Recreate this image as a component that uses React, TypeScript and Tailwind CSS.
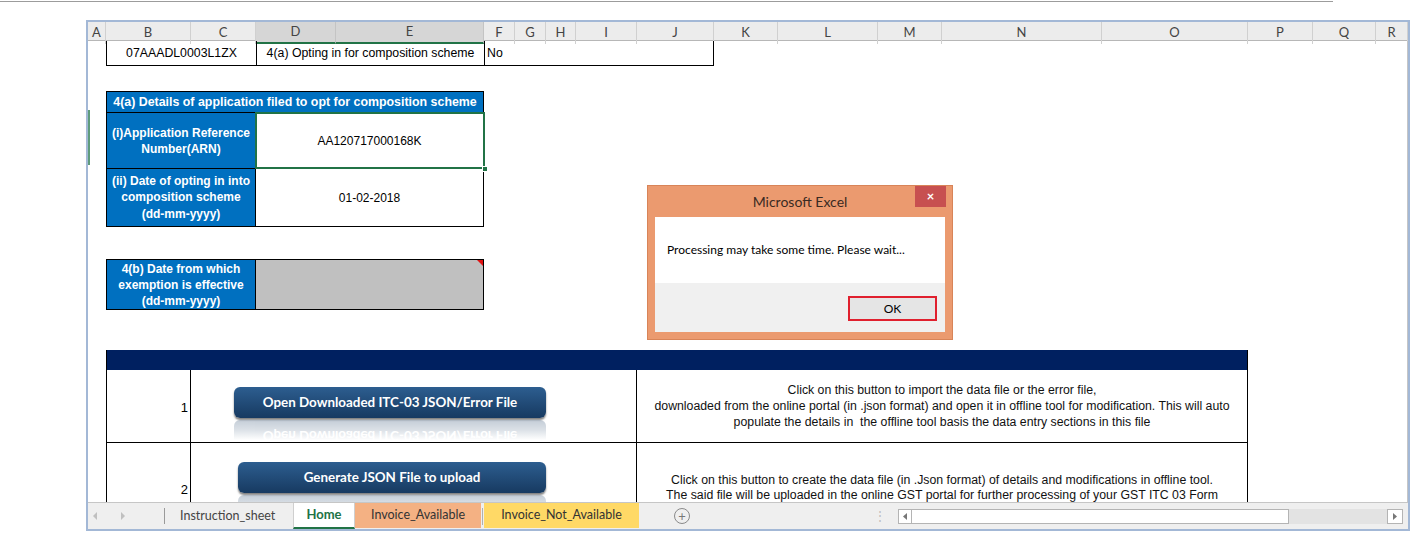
import React from 'react';

const gridCols =
  'grid grid-cols-[18px_85px_65px_80px_148px_31px_31px_30px_61px_77px_64px_100px_64px_160px_146px_65px_63px_32px]';

const columns = ['A', 'B', 'C', 'D', 'E', 'F', 'G', 'H', 'I', 'J', 'K', 'L', 'M', 'N', 'O', 'P', 'Q', 'R'];

const MacroButton = ({
  label,
  wrap,
  width,
  mirrorText = true,
}: {
  label: string;
  wrap: string;
  width: string;
  mirrorText?: boolean;
}) => {
  return (
    <div className={`${wrap} ${width}`}>
      <div className="h-[31px] rounded-[6px] bg-linear-to-b from-[#2d5e90] to-[#173a61] shadow-[0_2px_2px_rgba(0,0,0,0.5)] flex items-center justify-center text-white font-bold font-['Lato',sans-serif] text-[13.4px]">
        {label}
      </div>
      {/* glossy reflection under the shape */}
      <div className="relative h-[20px] overflow-hidden mt-[2px]">
        <div className="h-[31px] rounded-[6px] -scale-y-100 bg-[#6d849e] opacity-40 flex items-center justify-center text-white font-bold font-['Lato',sans-serif] text-[13.4px]">
          {mirrorText ? label : null}
        </div>
        <div className="absolute inset-0 bg-linear-to-b from-white/0 via-white/40 to-white" />
      </div>
    </div>
  );
};

const Dialog = () => {
  return (
    <div className="absolute left-[647px] top-[185px] w-[306px] h-[155px] bg-[#eb9a6f] border border-[#d88458] flex flex-col font-['Lato',sans-serif]">
      <div className="h-[31px] relative flex items-center justify-center text-[14px] text-[#3a2a22]">
        Microsoft Excel
        <div className="absolute top-0 right-[6px] w-[31px] h-[21px] bg-[#c75050] flex items-center justify-center text-white text-[13px] font-bold">
          ×
        </div>
      </div>
      <div className="mx-[7px] flex-1 flex flex-col">
        <div className="h-[66px] bg-white flex items-center pl-[12px] text-[12px] text-black">
          Processing may take some time. Please wait...
        </div>
        <div className="flex-1 bg-[#f0f0f0] flex justify-end pt-[13px] pr-[8px]">
          <div className="w-[89px] h-[25px] border-2 border-[#e0202e] bg-[#e5e5e5] flex items-center justify-center text-[12px] text-black">
            OK
          </div>
        </div>
      </div>
      <div className="h-[7px]" />
    </div>
  );
};

const TabBar = () => {
  return (
    <div className="h-[27px] bg-[#efefef] border-t border-[#c6c6c6] flex items-stretch font-['Lato',sans-serif] text-[12.5px] text-[#444]">
      <div className="w-[76px] shrink-0 flex items-center gap-[22px] pl-[4px]">
        <svg width="6" height="8" viewBox="0 0 6 8">
          <path d="M5 0 L1 4 L5 8 Z" fill="#c0c0c0" />
        </svg>
        <svg width="6" height="8" viewBox="0 0 6 8">
          <path d="M1 0 L5 4 L1 8 Z" fill="#c0c0c0" />
        </svg>
      </div>
      <div className="w-px h-[16px] shrink-0 bg-[#9a9a9a] self-center" />
      <div className="w-[128px] shrink-0 flex items-center pl-[15px] whitespace-nowrap">Instruction_sheet</div>
      <div className="w-[62px] shrink-0 bg-white border-x border-[#cfcfcf] border-b-2 border-b-[#217346] flex items-center justify-center font-bold text-[#217346] text-[13px]">
        Home
      </div>
      <div className="w-[126px] shrink-0 mb-[1px] bg-[#f4b183] flex items-center justify-center text-[#333] whitespace-nowrap">
        Invoice_Available
      </div>
      <div className="w-[3px] shrink-0 flex justify-center">
        <div className="w-px h-[17px] bg-[#b0b0b0] self-center" />
      </div>
      <div className="w-[155px] shrink-0 mb-[1px] bg-[#ffd966] flex items-center justify-center text-[#333] whitespace-nowrap">
        Invoice_Not_Available
      </div>
      <div className="ml-[35px] shrink-0 flex items-center">
        <div className="w-[16px] h-[16px] rounded-full border border-[#8a8a8a] flex items-center justify-center text-[#777] text-[13px] leading-none">
          +
        </div>
      </div>
      <div className="ml-[184px] shrink-0 flex items-center text-[#bdbdbd] text-[12px]">⋮</div>
      <div className="ml-[12px] shrink-0 flex items-center">
        <div className="w-[14px] h-[15px] border border-[#b4b4b4] bg-white flex items-center justify-center">
          <svg width="4" height="7" viewBox="0 0 4 7">
            <path d="M4 0 L0 3.5 L4 7 Z" fill="#777" />
          </svg>
        </div>
        <div className="w-[377px] h-[15px] border-y border-r border-[#b4b4b4] bg-white" />
        <div className="w-[98px] h-[15px] bg-[#e3e3e3]" />
        <div className="w-[16px] h-[15px] border border-[#b4b4b4] bg-white flex items-center justify-center">
          <svg width="4" height="7" viewBox="0 0 4 7">
            <path d="M0 0 L4 3.5 L0 7 Z" fill="#777" />
          </svg>
        </div>
      </div>
    </div>
  );
};

const App = () => {
  return (
    <div className="relative w-[1414px] h-[534px] bg-white overflow-hidden font-['Liberation_Sans',Arial,sans-serif] text-black">
      <div className="mt-px h-px w-[1333px] bg-[#9c9c9c]" />

      {/* Excel window */}
      <div className="mt-[18px] ml-[86px] w-[1324px] h-[511px] border-2 border-[#a3b8d6] flex flex-col">
        {/* column headers */}
        <div className={`${gridCols} h-[19px] bg-[#ececec] border-b border-[#b7b7b7] font-['Lato',sans-serif] text-[13px] text-[#444]`}>
          {columns.map((c) => (
            <div
              key={c}
              className={
                c === 'D' || c === 'E'
                  ? 'flex items-center justify-center bg-[#d6d6d6] border-r border-[#c4c4c4] border-b-2 border-b-[#217346]'
                  : 'flex items-center justify-center border-r border-[#d0d0d0]'
              }
            >
              {c}
            </div>
          ))}
        </div>

        {/* sheet */}
        <div className="h-[461px] overflow-hidden border-r border-[#c6c6c6] flex flex-col">
          <div className={`${gridCols} h-[25px] shrink-0 text-[12.3px]`}>
            <div />
            <div className="col-span-2 border-l border-b border-black flex items-center justify-center">07AAADL0003L1ZX</div>
            <div className="col-span-2 border-l border-b border-black flex items-center justify-center">
              4(a) Opting in for composition scheme
            </div>
            <div className="col-span-5 border-x border-b border-black flex items-center pl-[2px]">No</div>
          </div>

          <div className="h-[25px] shrink-0" />

          {/* 4(a) details */}
          <div className={`${gridCols} h-[136px] shrink-0`}>
            <div className="pt-[19px]">
              <div className="h-[55px] border-l-2 border-[#5f9c7d]" />
            </div>
            <div className="col-span-4 border border-black flex flex-col text-[12px]">
              <div className="h-[20px] bg-[#0070c0] text-white font-bold text-[12.4px] flex items-center justify-center whitespace-nowrap">
                4(a) Details of application filed to opt for composition scheme
              </div>
              <div className="h-[56px] border-t border-black flex">
                <div className="w-[149px] border-r border-black bg-[#0070c0] text-white font-bold text-center leading-[16px] flex items-center justify-center">
                  (i)Application Reference
                  <br />
                  Number(ARN)
                </div>
                <div className="flex-1 relative bg-white flex items-center justify-center">
                  AA120717000168K
                  <div className="absolute -top-px -left-px -right-[2px] -bottom-px border-2 border-[#217346]" />
                  <div className="absolute -bottom-[4px] -right-[5px] w-[6px] h-[6px] bg-[#217346] border border-white" />
                </div>
              </div>
              <div className="h-[58px] border-t border-black flex">
                <div className="w-[149px] border-r border-black bg-[#0070c0] text-white font-bold text-center leading-[16.5px] flex items-center justify-center">
                  (ii) Date of opting in into
                  <br />
                  composition scheme
                  <br />
                  (dd-mm-yyyy)
                </div>
                <div className="flex-1 bg-white flex items-center justify-center">01-02-2018</div>
              </div>
            </div>
          </div>

          <div className="h-[32px] shrink-0" />

          {/* 4(b) */}
          <div className={`${gridCols} h-[51px] shrink-0`}>
            <div />
            <div className="col-span-4 border border-black flex text-[12px]">
              <div className="w-[149px] border-r border-black bg-[#0070c0] text-white font-bold text-center leading-[16px] flex items-center justify-center">
                4(b) Date from which
                <br />
                exemption is effective
                <br />
                (dd-mm-yyyy)
              </div>
              <div className="flex-1 relative bg-[#c0c0c0]">
                <div className="absolute top-0 right-0 w-0 h-0 border-l-[6px] border-l-transparent border-t-[6px] border-t-[#e01010]" />
              </div>
            </div>
          </div>

          <div className="h-[40px] shrink-0" />

          {/* action table */}
          <div className={`${gridCols} shrink-0`}>
            <div />
            <div className="col-span-14 border-x border-black flex flex-col">
              <div className="h-[20px] bg-[#002060]" />
              <div className="h-[73px] border-b border-black flex">
                <div className="w-[84px] border-r border-black flex items-center justify-end pr-[2px] pt-[3px] text-[13px]">1</div>
                <div className="w-[446px] border-r border-black">
                  <MacroButton label="Open Downloaded ITC-03 JSON/Error File" wrap="ml-[43px] mt-[17px]" width="w-[312px]" />
                </div>
                <div className="flex-1 flex items-center justify-center text-center text-[12.3px] leading-[16px] text-[#111]">
                  <div>
                    Click on this button to import the data file or the error file,
                    <br />
                    downloaded from the online portal (in .json format) and open it in offline tool for modification. This will auto
                    <br />
                    populate the details in&nbsp; the offline tool basis the data entry sections in this file
                  </div>
                </div>
              </div>
              <div className="h-[90px] flex">
                <div className="w-[84px] border-r border-black flex items-center justify-end pr-[2px] pt-[3px] text-[13px]">2</div>
                <div className="w-[446px] border-r border-black">
                  <MacroButton
                    label="Generate JSON File to upload"
                    wrap="ml-[47px] mt-[19px]"
                    width="w-[308px]"
                    mirrorText={false}
                  />
                </div>
                <div className="flex-1 flex items-center justify-center text-center text-[12.3px] leading-[15px] text-[#111]">
                  <div>
                    Click on this button to create the data file (in .Json format) of details and modifications in offline tool.
                    <br />
                    The said file will be uploaded in the online GST portal for further processing of your GST ITC 03 Form
                  </div>
                </div>
              </div>
            </div>
          </div>
        </div>

        <TabBar />
      </div>

      <Dialog />
    </div>
  );
};

export default App;
